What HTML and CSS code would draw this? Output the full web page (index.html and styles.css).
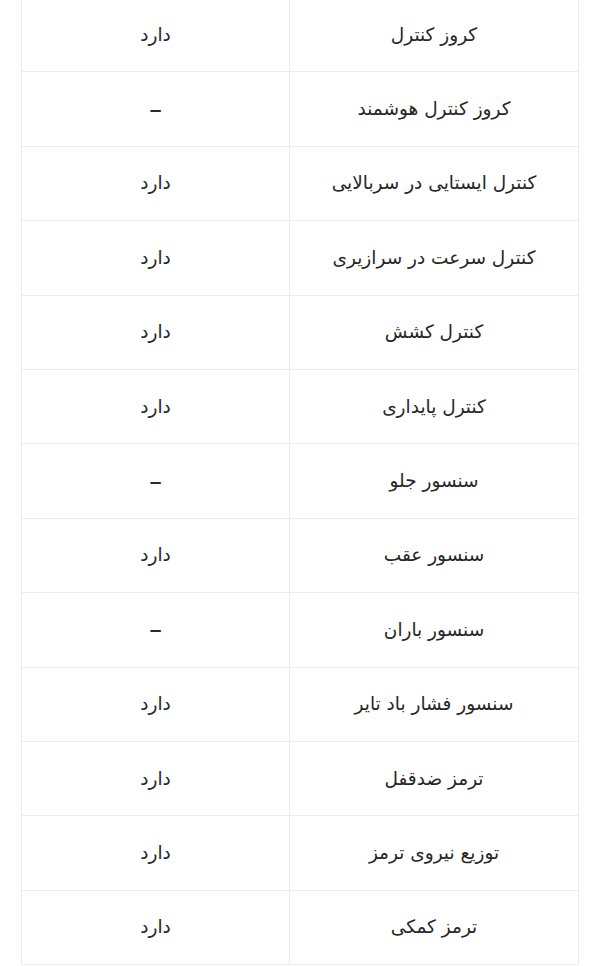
FILE: index.html
```html
<!DOCTYPE html>
<html lang="fa" dir="rtl">
<head>
<meta charset="utf-8">
<link rel="stylesheet" href="styles.css">
</head>
<body>
<div class="wrap">
<table class="spec">
<tbody>
<tr><td class="name">کروز کنترل</td><td class="val">دارد</td></tr>
<tr><td class="name">کروز کنترل هوشمند</td><td class="val"><span class="dash">–</span></td></tr>
<tr><td class="name">کنترل ایستایی در سربالایی</td><td class="val">دارد</td></tr>
<tr><td class="name">کنترل سرعت در سرازیری</td><td class="val">دارد</td></tr>
<tr><td class="name">کنترل کشش</td><td class="val">دارد</td></tr>
<tr><td class="name">کنترل پایداری</td><td class="val">دارد</td></tr>
<tr><td class="name">سنسور جلو</td><td class="val"><span class="dash">–</span></td></tr>
<tr><td class="name">سنسور عقب</td><td class="val">دارد</td></tr>
<tr><td class="name">سنسور باران</td><td class="val"><span class="dash">–</span></td></tr>
<tr><td class="name">سنسور فشار باد تایر</td><td class="val">دارد</td></tr>
<tr><td class="name">ترمز ضدقفل</td><td class="val">دارد</td></tr>
<tr><td class="name">توزیع نیروی ترمز</td><td class="val">دارد</td></tr>
<tr><td class="name">ترمز کمکی</td><td class="val">دارد</td></tr>
</tbody>
</table>
</div>
</body>
</html>
```
FILE: styles.css
```css
html, body {
  margin: 0;
  padding: 0;
  background: #ffffff;
}
body {
  font-family: "DejaVu Sans", "Noto Sans", sans-serif;
  color: #262626;
  overflow: hidden;
}
.wrap {
  padding: 0 17px 0 23px;
  margin-top: -3px;
}
.spec {
  width: 556px;
  border-collapse: collapse;
  table-layout: fixed;
}
.spec td {
  border: 1px solid #ececec;
  height: 73.4px;
  padding: 0;
  text-align: center;
  vertical-align: middle;
  font-size: 18.5px;
  line-height: 26px;
}
.spec td.name {
  width: 288px;
}
.spec td.val {
  width: 267px;
}
.dash {
  font-family: "Liberation Sans", sans-serif;
  font-size: 21px;
  font-weight: bold;
  color: #2a2a2a;
}
```
